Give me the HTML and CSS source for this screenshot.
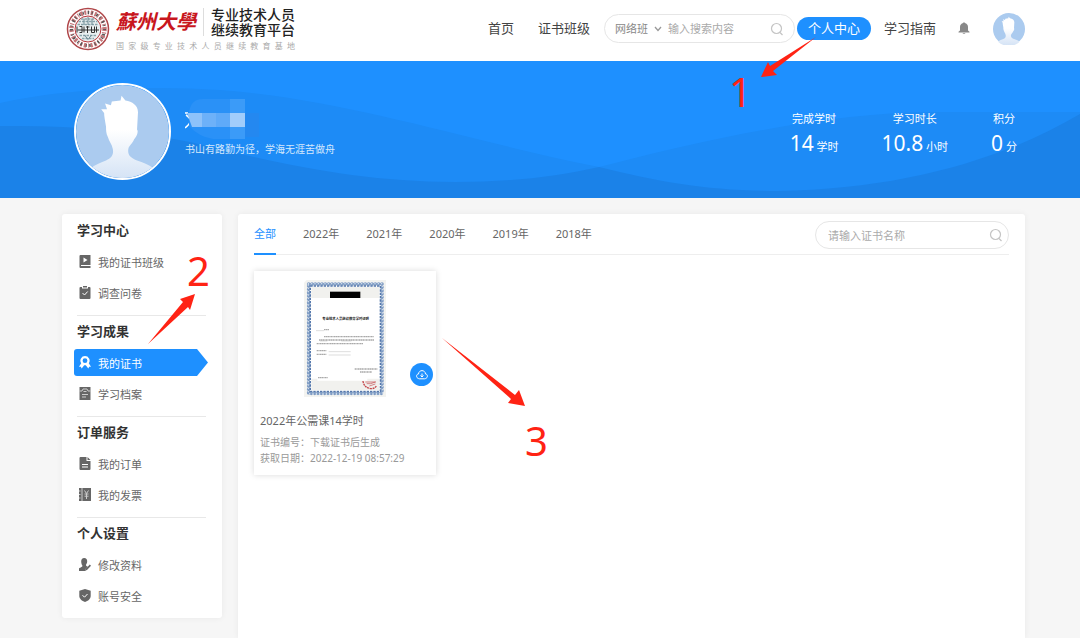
FILE: index.html
```html
<!DOCTYPE html>
<html lang="zh-CN">
<head>
  <meta charset="UTF-8" />
  <meta name="viewport" content="width=device-width, initial-scale=1.0"/>
  <title>我的证书</title>
  <link rel="stylesheet" href="styles.css">
</head>
<body>
  <!-- shared shapes -->
  <svg class="defs" width="0" height="0">
    <defs>
      <linearGradient id="skin" x1="0" y1="0" x2="0" y2="1">
        <stop offset="0.4" stop-color="#fff"/>
        <stop offset="1" stop-color="#d3e2f5"/>
      </linearGradient>
      <symbol id="person" viewBox="0 0 96 96">
        <circle cx="48" cy="48" r="48" fill="#abcbef"/>
        <path fill="url(#skin)" d="M31 43c-1-6-2-11-2-14l-3-4 6 0-2-6 6 2 1-4 9-1 1-5 4 5c7 1 13 5 13 12l-1 18c2 3-1 8-3 10-2 5-5 6-6 10-1 7 3 9 9 12 6 2 12 4 17 8a48 48 0 0 1-65 0c5-4 11-6 16-8 6-3 8-6 7-12-1-5-4-8-5-12-2-4-2-8-2-11z"/>
      </symbol>
      <symbol id="search" viewBox="0 0 14 14">
        <g fill="none" stroke="#c4c4c4" stroke-width="1.2"><circle cx="6.5" cy="6.5" r="5"/><path d="M10 10.5l2.5 2.5"/></g>
      </symbol>
    </defs>
  </svg>

  <header class="header">
    <a class="logo" href="#">
      <svg class="seal" viewBox="0 0 88 88">
        <circle cx="44" cy="44" r="41" fill="#fff" stroke="#b0474a" stroke-width="3"/>
        <circle cx="44" cy="44" r="33" fill="none" stroke="#c4777a" stroke-width="9" stroke-dasharray="4 3 2 4 5 3"/>
        <circle cx="44" cy="44" r="33" fill="none" stroke="#555" stroke-width="6" stroke-dasharray="2 8 3 5"/>
        <circle cx="44" cy="44" r="26" fill="#e9eff0" stroke="#b8343a" stroke-width="2"/>
        <path d="M23 35h42M25 29h38M30 24h28M27 57h34M32 63h24" stroke="#8aa4ab" stroke-width="3" stroke-dasharray="5 2"/>
        <path d="M22 39v12M27 39h5v12h-5M36 39v12M40 40h7M43 38v14M51 39v12h6V39M61 39v12M23 46h43" fill="none" stroke="#333" stroke-width="2"/>
        <path d="M36 24v12M44 20v16M52 24v12M37 56l7 9 7-9" fill="none" stroke="#6d8b94" stroke-width="2"/>
      </svg>
      <span class="logo-words">
        <span class="logo-top">
          <span class="logo-name">蘇州大學</span>
          <span class="logo-platform">专业技术人员<br>继续教育平台</span>
        </span>
        <span class="logo-tagline">国 家 级 专 业 技 术 人 员 继 续 教 育 基 地</span>
      </span>
    </a>

    <nav class="nav">
      <a class="nav-link" href="#">首页</a>
      <a class="nav-link" href="#">证书班级</a>
      <form class="search nav-search">
        <select class="search-type" aria-label="搜索类型"><option>网络班</option></select>
        <svg class="chevron" viewBox="0 0 8 6"><path d="M1 1l3 3.5L7 1" fill="none" stroke="#999" stroke-width="1.3"/></svg>
        <input class="search-input" type="text" placeholder="输入搜索内容" aria-label="搜索内容">
        <button class="search-btn" aria-label="搜索"><svg viewBox="0 0 14 14"><use href="#search"/></svg></button>
      </form>
      <a class="nav-link nav-active" href="#">个人中心</a>
      <a class="nav-link" href="#">学习指南</a>
      <button class="bell" aria-label="消息">
        <svg viewBox="0 0 12 13"><path fill="#888" d="M5.2 1a.8.8 0 0 1 1.6 0c2 .4 3.2 2 3.2 4v3.6l1.5 1.2v.7H.5v-.7L2 8.600V5c0-2 1.200-3.600 3.200-4zM4.500 11.300h3c-.3 1-2.700 1-3 0z"/></svg>
      </button>
      <svg class="avatar-small" viewBox="0 0 96 96"><use href="#person"/></svg>
    </nav>
  </header>

  <section class="banner">
    <svg class="waves" viewBox="0 0 1080 137" preserveAspectRatio="none">
      <path fill="#1d8bf6" d="M0 42C60 28 150 24 220 29C350 39 460 78 599 106C700 80 830 50 940 51H1080V137H0z"/>
      <path fill="#1b82e8" d="M0 65C70 64 130 69 190 81C280 103 360 121 455 121C510 121 555 116 599 106C660 121 710 130 778 130C900 128 1000 100 1080 53V137H0z"/>
    </svg>
    <svg class="avatar" viewBox="0 0 96 96"><use href="#person"/></svg>
    <div class="profile">
      <svg class="masked-name" viewBox="0 0 76 42">
        <path d="M0 16h3M1 18c2 1 4 4 6 6M7 22c-2 4-4 7-7 9" fill="none" stroke="#fff" stroke-width="1.500"/>
        <path fill="#2a91f7" d="M4 15q2-13 14-13h42v40H28Q14 40 4 29z"/>
        <path fill="#3b9bf8" d="M45 2h15v40H45z"/>
        <path fill="#8ec2fa" d="M2 16h15v14H7z"/>
        <path fill="#6db1f9" d="M17 16h14v14H17z"/>
        <path fill="#5faaf9" d="M31 16h14v14H31z"/>
        <path fill="#a2cdfb" d="M45 16h15v14H45z"/>
        <path fill="#2488f0" d="M60 16h14v24H60z"/>
      </svg>
      <p class="motto">书山有路勤为径，学海无涯苦做舟</p>
    </div>
    <dl class="stats">
      <div class="stat"><dt>完成学时</dt><dd><b>14</b> 学时</dd></div>
      <div class="stat"><dt>学习时长</dt><dd><b>10.8</b> 小时</dd></div>
      <div class="stat"><dt>积分</dt><dd><b>0</b> 分</dd></div>
    </dl>
  </section>

  <div class="container">
    <aside class="sidebar">
      <section class="menu">
        <h2>学习中心</h2>
        <a href="#"><svg viewBox="0 0 12 13"><path d="M1.500 0H11.500v10H2v1h9.500V13H1.500Q.5 13 .5 12V1q0-1 1-1z"/><path class="cut" d="M4.500 2.500v5L8.500 5z"/></svg>我的证书班级</a>
        <a href="#"><svg viewBox="0 0 12 13"><path d="M1.500 1H3v1.500h6V1h1.500q1 0 1 1v10q0 1-1 1h-9q-1 0-1-1V2q0-1 1-1zM4 0h4v1.500H4z"/><path class="line" d="M3.500 7l2 2 3.200-3.500"/></svg>调查问卷</a>
      </section>
      <section class="menu">
        <h2>学习成果</h2>
        <a class="active" href="#"><svg viewBox="0 0 12 13"><path fill-rule="evenodd" d="M6 0a4.600 4.600 0 0 1 3.800 7.200l2.200 3.600-1.800-.1-.9 1.700L6.800 9.200H5.200l-2.500 3.200-.9-1.700-1.800.1 2.200-3.600A4.600 4.600 0 0 1 6 0zM6 2.300a2.400 2.400 0 1 0 0 4.800 2.400 2.400 0 0 0 0-4.800z"/></svg>我的证书</a>
        <a href="#"><svg viewBox="0 0 12 13"><path d="M.5 0h11v13H.5z"/><path class="line thin" d="M.5 4h2.500l1-2h4l1 2h2.500M4.500 4.500h3M3 7.500h6M3 10h4"/></svg>学习档案</a>
      </section>
      <section class="menu">
        <h2>订单服务</h2>
        <a href="#"><svg viewBox="0 0 12 13"><path d="M1.500 0H7.500v4h4v8q0 1-1 1h-9q-1 0-1-1V1q0-1 1-1zM8.500 0l3 3h-3z"/><path class="line" d="M3 7.500h6M3 10h6"/></svg>我的订单</a>
        <a href="#"><svg viewBox="0 0 12 13"><path d="M0 0h12v13H0z"/><path class="line thin" d="M3 0v13M0 3h1.500M0 6.500h1.500M0 10h1.500M5.500 2.500l2 3 2-3M5.500 6h4M5.500 8.200h4M7.500 5.500V11"/></svg>我的发票</a>
      </section>
      <section class="menu">
        <h2>个人设置</h2>
        <a href="#"><svg viewBox="0 0 12 13"><path d="M5.200 0c2 0 3 1.400 3 3.200 0 1.600-.6 2.600-1.200 3.600-.2.900.3 1.300 1.700 1.800L6.500 11v2H0v-2.200c0-1.300 3.500-1.300 3.500-3C2.700 6.700 2.200 5 2.200 3.200 2.200 1.400 3.200 0 5.200 0zM10.800 6.500l1.200 1.200-4 4.300-1.500.5.300-1.700z"/></svg>修改资料</a>
        <a href="#"><svg viewBox="0 0 12 13"><path d="M6 0l5.700 1.800v5C11.700 10 9 12 6 13 3 12 .3 10 .3 6.800v-5z"/><path class="line" d="M3.500 6.200l2 2 3-3.200"/></svg>账号安全</a>
      </section>
    </aside>

    <main class="content">
      <div class="tabs">
        <a class="tab current" href="#">全部</a>
        <a class="tab" href="#">2022年</a>
        <a class="tab" href="#">2021年</a>
        <a class="tab" href="#">2020年</a>
        <a class="tab" href="#">2019年</a>
        <a class="tab" href="#">2018年</a>
        <form class="search tab-search">
          <input class="search-input" type="text" placeholder="请输入证书名称" aria-label="证书名称">
          <button class="search-btn" aria-label="搜索"><svg viewBox="0 0 14 14"><use href="#search"/></svg></button>
        </form>
      </div>

      <article class="card">
        <svg class="certificate" viewBox="0 0 246 351">
          <path fill="#f3f3f0" d="M8 0h238v351H0V8z"/>
          <g fill="none" stroke-linecap="round">
            <rect x="14" y="12" width="220" height="328" stroke="#7f9cc4" stroke-width="11" stroke-dasharray="0 10"/>
            <rect x="13" y="11" width="222" height="330" stroke="#dfe6ef" stroke-width="4" stroke-dasharray="0 10"/>
          </g>
          <rect x="19" y="18" width="210" height="316" fill="#fff" stroke="#5578ac" stroke-width="4" stroke-dasharray="7 3"/>
          <path fill="#f1f1ee" d="M22 21h204v33H22zM22 296h204v35H22z"/>
          <path fill="#fff" d="M40 290h150v12H40z"/>
          <path fill="#000" d="M78 35h91v19H78z"/>
          <text class="cert-title" x="125" y="121">专业技术人员继续教育学时证明</text>
          <g fill="none" stroke="#aaa" stroke-width="4">
            <path stroke-dasharray="5 1 3 1" d="M60 149h16M60 170h150M45 180h165M38 191h140M38 212h30M38 223h30M152 267h68M168 276h36M42 293h30"/>
          </g>
          <path stroke="#999" stroke-width="1" d="M36 152h24M74 215h66M74 225h66M48 183h22M112 183h30"/>
          <g fill="none" stroke="#c4484c">
            <path d="M177 303q2 20 25 23 12-1 15-9" stroke-width="4" stroke-dasharray="6 2"/>
            <path d="M184 306h32M188 311h12l14-5M196 318l18-6" stroke-width="2"/>
          </g>
        </svg>
        <button class="download" aria-label="下载证书">
          <svg viewBox="0 0 12 12"><path d="M3.500 9.800C-.4 9.400 0 5 2.500 5c.3-4.500 6.700-4.500 7 0 2.500 0 2.900 4.400-1 4.800zM6 4.500v3.500M4.500 6.500L6 8l1.500-1.500" fill="none" stroke="#fff"/></svg>
        </button>
        <h3>2022年公需课14学时</h3>
        <p>证书编号：下载证书后生成</p>
        <p>获取日期：2022-12-19 08:57:29</p>
      </article>
    </main>
  </div>

  <!-- step markers over the page -->
  <svg class="steps" width="1080" height="638" viewBox="0 0 1080 638">
    <path d="M816 37L770 66l-2-4-7 15 16-2-4-4z"/>
    <path d="M148 344l35-42-3-3 15-5-5 16-2-3z"/>
    <path d="M442 338l73 57 4-5 6 16-17-3 3-4z"/>
    <text x="729" y="107">1</text>
    <text x="187" y="286">2</text>
    <text x="525" y="456">3</text>
  </svg>
</body>
</html>
```

FILE: styles.css
```css
* {
  box-sizing: border-box;
}

body {
  margin: 0;
  min-height: 100vh;
  display: flex;
  flex-direction: column;
  position: relative;
  background-color: #f6f6f6;
  color: #666;
  font-family: "Noto Sans", "Noto Sans CJK SC", sans-serif;
  font-size: 11px;
}

a {
  color: inherit;
  text-decoration: none;
}

h2, h3, p, dl, dd {
  margin: 0;
}

svg {
  display: block;
  flex: none;
}

button, input, select {
  margin: 0;
  padding: 0;
  border: none;
  background: none;
  font: inherit;
  color: inherit;
  outline: none;
}

button {
  cursor: pointer;
}

.defs {
  position: absolute;
}

/* header */
.header {
  display: flex;
  align-items: center;
  justify-content: space-between;
  height: 61px;
  padding: 0 55px 4px 66px;
  background-color: #fff;
}

.logo {
  display: flex;
  align-items: center;
  gap: 6px;
}

.seal {
  width: 44px;
  height: 44px;
}

.logo-words {
  display: flex;
  flex-direction: column;
  gap: 3px;
  padding-top: 2px;
}

.logo-top {
  display: flex;
  align-items: center;
}

.logo-name {
  padding-right: 7px;
  border-right: 1px solid #ddd;
  color: #c8161d;
  font-size: 20px;
  font-weight: bold;
  font-style: italic;
  line-height: 28px;
}

.logo-platform {
  padding-left: 7px;
  color: #222;
  font-size: 14px;
  font-weight: 500;
  line-height: 15px;
}

.logo-tagline {
  color: #aaa;
  font-size: 8px;
  line-height: 12px;
  text-align: justify;
  text-align-last: justify;
}

.nav {
  display: flex;
  align-items: center;
}

.nav-link {
  padding: 0 12px;
  color: #444;
  font-size: 13px;
  line-height: 23px;
}

.nav-active {
  margin-right: 1px;
  padding: 0 11px;
  border-radius: 12px;
  background-color: #1e90ff;
  color: #fff;
}

.search {
  display: flex;
  align-items: center;
  border: 1px solid #e6e6e6;
  border-radius: 15px;
  background-color: #fff;
}

.nav-search {
  width: 191px;
  height: 29px;
  margin: 0 2px;
  padding: 0 10px;
}

.search-type {
  appearance: none;
  width: 36px;
  color: #888;
}

.chevron {
  width: 8px;
  height: 6px;
  margin: 0 6px 0 3px;
}

.search-input {
  flex: 1;
  min-width: 0;
}

.search-input::placeholder {
  color: #aaa;
}

.search-btn svg {
  width: 14px;
  height: 14px;
}

.bell {
  margin: 0 23px 0 10px;
}

.bell svg {
  width: 12px;
  height: 13px;
}

.avatar-small {
  width: 32px;
  height: 32px;
}

/* banner */
.banner {
  position: relative;
  display: flex;
  align-items: center;
  height: 137px;
  padding: 4px 63px 0 74px;
  background-color: #1e90ff;
  color: #fff;
}

.waves {
  position: absolute;
  inset: 0;
  width: 100%;
  height: 100%;
}

.avatar {
  position: relative;
  width: 97px;
  height: 97px;
  border: 2px solid #fff;
  border-radius: 50%;
}

.profile {
  position: relative;
  margin-left: 14px;
  padding-bottom: 8px;
}

.masked-name {
  width: 76px;
  height: 42px;
}

.motto {
  color: #d5e8fd;
  font-size: 10px;
  line-height: 20px;
}

.stats {
  position: relative;
  display: flex;
  gap: 43px;
  margin-left: auto;
  padding-top: 6px;
  text-align: center;
}

.stat dt {
  line-height: 20px;
}

.stat dd {
  line-height: 28px;
}

.stat b {
  font-size: 21px;
  font-weight: normal;
}

/* page body */
.container {
  flex: 1;
  display: flex;
  gap: 16px;
  padding: 16px 55px 0 62px;
}

.sidebar {
  align-self: flex-start;
  width: 160px;
  padding: 1px 14px 0 12px;
  border-radius: 3px;
  background-color: #fff;
  box-shadow: 0 0 6px rgba(0, 0, 0, 0.06);
}

.menu {
  padding-bottom: 7px;
}

.menu + .menu {
  position: relative;
  padding-top: 1px;
}

.menu + .menu::before {
  content: "";
  position: absolute;
  top: 0;
  left: 3px;
  right: 2px;
  height: 1px;
  background-color: #e8e8e8;
}

.menu h2 {
  padding-left: 3px;
  color: #333;
  font-size: 13px;
  font-weight: bold;
  line-height: 31px;
}

.menu a {
  display: flex;
  align-items: center;
  gap: 7px;
  height: 27px;
  margin: 2px 0;
  padding-left: 5px;
}

.menu a + a {
  margin-top: 4px;
}

.menu svg {
  width: 12px;
  height: 13px;
  fill: #666;
}

.menu .cut {
  fill: #fff;
}

.menu .line {
  fill: none;
  stroke: #fff;
}

.menu .thin {
  stroke: #ccc;
}

.menu .active {
  border-radius: 3px 0 0 3px;
  background-color: #1e90ff;
  clip-path: polygon(0 0, calc(100% - 11px) 0, 100% 50%, calc(100% - 11px) 100%, 0 100%);
  color: #fff;
}

.menu .active svg {
  fill: #fff;
}

.content {
  flex: 1;
  padding: 0 16px;
  border-radius: 3px 3px 0 0;
  background-color: #fff;
  box-shadow: 0 0 6px rgba(0, 0, 0, 0.06);
}

.tabs {
  display: flex;
  gap: 27px;
  height: 41px;
  border-bottom: 1px solid #eee;
}

.tab {
  height: 41px;
  line-height: 40px;
}

.current {
  border-bottom: 2px solid #1e90ff;
  color: #1e90ff;
}

.tab-search {
  width: 194px;
  height: 28px;
  margin: 7px 0 0 auto;
  padding: 0 5px 0 12px;
}

.card {
  position: relative;
  width: 182px;
  margin-top: 16px;
  padding: 9px 6px;
  background-color: #fff;
  box-shadow: 0 0 6px rgba(0, 0, 0, 0.15);
}

.certificate {
  width: 82px;
  height: 117px;
  margin: 0 auto 14px;
}

.cert-title {
  fill: #222;
  font-size: 10px;
  font-weight: bold;
  text-anchor: middle;
}

.download {
  position: absolute;
  top: 92px;
  right: 3px;
  display: flex;
  align-items: center;
  justify-content: center;
  width: 23px;
  height: 23px;
  border-radius: 50%;
  background-color: #1e90ff;
}

.download svg {
  width: 12px;
  height: 12px;
}

.card h3 {
  margin-bottom: 3px;
  font-size: 11px;
  font-weight: normal;
  line-height: 20px;
}

.card p {
  color: #999;
  font-size: 10px;
  line-height: 16px;
}

.steps {
  position: absolute;
  top: 0;
  left: 0;
  fill: #ff2314;
  font-size: 40px;
  pointer-events: none;
}
```
